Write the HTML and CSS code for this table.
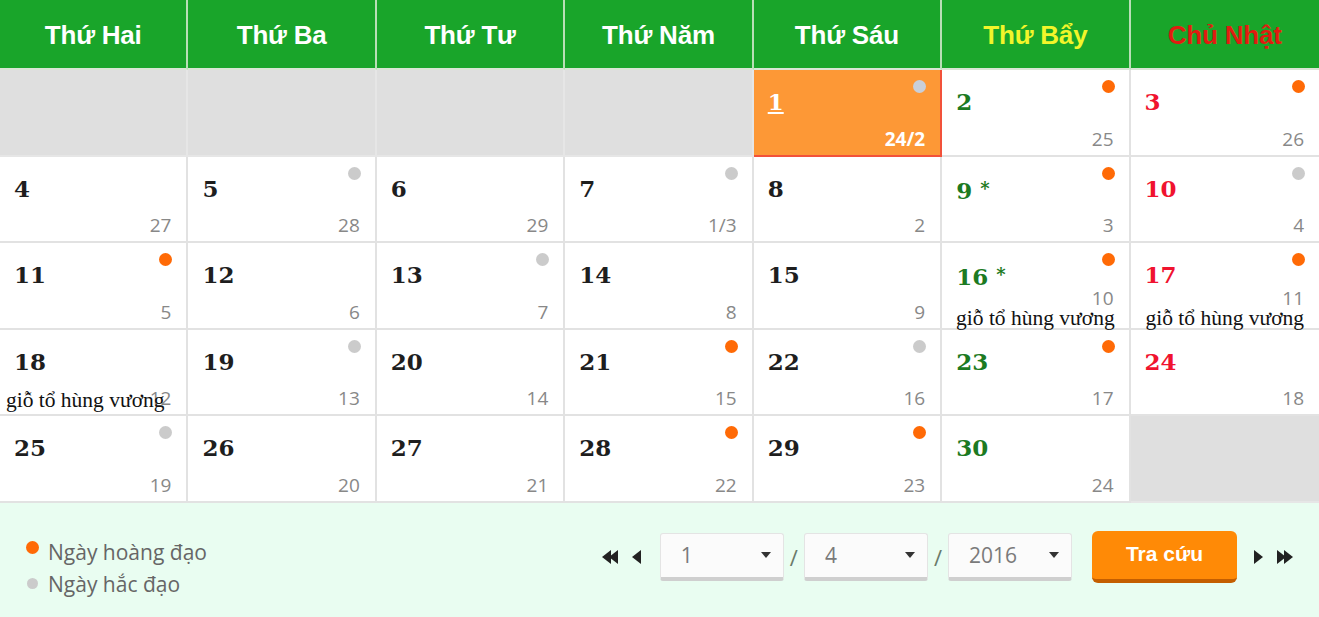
FILE: index.html
```html
<!DOCTYPE html>
<html lang="vi">
<head>
<meta charset="utf-8">
<title>Lịch tháng 4/2016</title>
<link rel="stylesheet" href="styles.css">
</head>
<body>
<div class="cal">
  <div class="hd">Thứ Hai</div>
  <div class="hd">Thứ Ba</div>
  <div class="hd">Thứ Tư</div>
  <div class="hd">Thứ Năm</div>
  <div class="hd">Thứ Sáu</div>
  <div class="hd hd-sat">Thứ Bẩy</div>
  <div class="hd hd-sun">Chủ Nhật</div>

  <div class="cell empty"></div>
  <div class="cell empty"></div>
  <div class="cell empty"></div>
  <div class="cell empty"></div>
  <div class="cell today"><span class="day">1</span><span class="dot dot-grey"></span><span class="lunar">24/2</span></div>
  <div class="cell sat"><span class="day">2</span><span class="dot dot-or"></span><span class="lunar">25</span></div>
  <div class="cell sun"><span class="day">3</span><span class="dot dot-or"></span><span class="lunar">26</span></div>

  <div class="cell"><span class="day">4</span><span class="lunar">27</span></div>
  <div class="cell"><span class="day">5</span><span class="dot dot-grey"></span><span class="lunar">28</span></div>
  <div class="cell"><span class="day">6</span><span class="lunar">29</span></div>
  <div class="cell"><span class="day">7</span><span class="dot dot-grey"></span><span class="lunar">1/3</span></div>
  <div class="cell"><span class="day">8</span><span class="lunar">2</span></div>
  <div class="cell sat"><span class="day">9 <span class="star">*</span></span><span class="dot dot-or"></span><span class="lunar">3</span></div>
  <div class="cell sun"><span class="day">10</span><span class="dot dot-grey"></span><span class="lunar">4</span></div>

  <div class="cell"><span class="day">11</span><span class="dot dot-or"></span><span class="lunar">5</span></div>
  <div class="cell"><span class="day">12</span><span class="lunar">6</span></div>
  <div class="cell"><span class="day">13</span><span class="dot dot-grey"></span><span class="lunar">7</span></div>
  <div class="cell"><span class="day">14</span><span class="lunar">8</span></div>
  <div class="cell"><span class="day">15</span><span class="lunar">9</span></div>
  <div class="cell sat fest-a"><span class="day">16 <span class="star">*</span></span><span class="dot dot-or"></span><span class="lunar">10</span><span class="fest">giỗ tổ hùng vương</span></div>
  <div class="cell sun fest-a"><span class="day">17</span><span class="dot dot-or"></span><span class="lunar">11</span><span class="fest">giỗ tổ hùng vương</span></div>

  <div class="cell fest-b"><span class="day">18</span><span class="lunar">12</span><span class="fest">giỗ tổ hùng vương</span></div>
  <div class="cell"><span class="day">19</span><span class="dot dot-grey"></span><span class="lunar">13</span></div>
  <div class="cell"><span class="day">20</span><span class="lunar">14</span></div>
  <div class="cell"><span class="day">21</span><span class="dot dot-or"></span><span class="lunar">15</span></div>
  <div class="cell"><span class="day">22</span><span class="dot dot-grey"></span><span class="lunar">16</span></div>
  <div class="cell sat"><span class="day">23</span><span class="dot dot-or"></span><span class="lunar">17</span></div>
  <div class="cell sun"><span class="day">24</span><span class="lunar">18</span></div>

  <div class="cell"><span class="day">25</span><span class="dot dot-grey"></span><span class="lunar">19</span></div>
  <div class="cell"><span class="day">26</span><span class="lunar">20</span></div>
  <div class="cell"><span class="day">27</span><span class="lunar">21</span></div>
  <div class="cell"><span class="day">28</span><span class="dot dot-or"></span><span class="lunar">22</span></div>
  <div class="cell"><span class="day">29</span><span class="dot dot-or"></span><span class="lunar">23</span></div>
  <div class="cell sat"><span class="day">30</span><span class="lunar">24</span></div>
  <div class="cell empty"></div>
</div>

<div class="foot">
  <div class="legend">
    <div class="lg-item"><span class="lg-dot dot-or"></span>Ngày hoàng đạo</div>
    <div class="lg-item"><span class="lg-dot dot-grey"></span>Ngày hắc đạo</div>
  </div>
  <div class="controls">
    <span class="nav nav-prev">
      <svg width="22" height="16" viewBox="0 0 22 16"><polygon points="0,8 9,1 9,15" fill="#222"/><polygon points="7,8 16,1 16,15" fill="#222"/></svg>
      <svg width="10" height="16" viewBox="0 0 10 16"><polygon points="0,8 9,1 9,15" fill="#222"/></svg>
    </span>
    <div class="sel"><span>1</span><span class="caret"></span></div>
    <span class="slash">/</span>
    <div class="sel"><span>4</span><span class="caret"></span></div>
    <span class="slash">/</span>
    <div class="sel"><span>2016</span><span class="caret"></span></div>
    <button class="btn">Tra cứu</button>
    <span class="nav nav-next">
      <svg width="10" height="16" viewBox="0 0 10 16"><polygon points="10,8 1,1 1,15" fill="#222"/></svg>
      <svg width="22" height="16" viewBox="0 0 22 16"><polygon points="15,8 6,1 6,15" fill="#222"/><polygon points="22,8 13,1 13,15" fill="#222"/></svg>
    </span>
  </div>
</div>
</body>
</html>
```

FILE: styles.css
```css
html, body {
  margin: 0;
  padding: 0;
  background: #fff;
}
body {
  width: 1319px;
  height: 617px;
  overflow: hidden;
  font-family: "Liberation Sans", Arial, sans-serif;
}
.cal {
  display: grid;
  grid-template-columns: repeat(7, 1fr);
  grid-template-rows: 70px repeat(5, 86.6px);
}
.hd {
  background: #19a52a;
  color: #fff;
  font-weight: bold;
  font-size: 26px;
  display: flex;
  align-items: center;
  justify-content: center;
  padding-top: 3px;
  border-right: 2px solid #b9dfb6;
  border-bottom: 2px solid #d9e6d6;
  box-sizing: border-box;
  letter-spacing: -0.2px;
}
.hd-sat { color: #f2f52a; }
.hd-sun { color: #e01c10; border-right: none; }

.cell {
  position: relative;
  box-sizing: border-box;
  border-right: 2px solid #e2e2e2;
  border-bottom: 2px solid #e2e2e2;
  background: #fff;
  color: #1e1e1e;
}
.cell:nth-child(7n) { border-right: none; }
.cell.empty { background: #dfdfdf; border-color: #e6e6e6; }

.day {
  position: absolute;
  left: 14px;
  top: 19px;
  font-family: "DejaVu Serif", Georgia, serif;
  font-weight: bold;
  font-size: 23px;
  line-height: 26px;
}
.star {
  font-size: 18px;
  vertical-align: 4px;
}
.lunar {
  position: absolute;
  right: 15px;
  bottom: 4px;
  font-family: "Open Sans", "Liberation Sans", sans-serif;
  font-size: 19px;
  line-height: 24px;
  color: #888;
}
.dot {
  position: absolute;
  top: 10px;
  right: 14px;
  width: 13px;
  height: 13px;
  border-radius: 50%;
}
.dot-or { background: #ff6a06; }
.dot-grey { background: #cbcbcb; }

.sat .day { color: #1c7a22; }
.sun .day { color: #f0132f; }

.today {
  background: #fd9836;
  border-right: 2px solid #f2513a;
  border-bottom: 2px solid #f2513a;
}
.today .day { color: #fff; text-decoration: underline; text-underline-offset: 2px; }
.today .lunar { color: #fff; font-weight: bold; }
.today .dot { background: #c9cfd9; }

.fest {
  position: absolute;
  left: 0;
  right: 0;
  text-align: center;
  font-family: "Liberation Serif", "Times New Roman", serif;
  font-size: 21.5px;
  line-height: 20px;
  color: #111;
  white-space: nowrap;
}
.fest-a .lunar { bottom: 18px; }
.fest-a .fest { bottom: 0; }
.fest-b .fest { bottom: 4px; left: -16px; }

.foot {
  height: 114px;
  background: #e9fdf1;
  display: flex;
  align-items: center;
  justify-content: space-between;
  padding: 0 26px 0 26px;
  box-sizing: border-box;
}
.legend {
  display: flex;
  flex-direction: column;
  gap: 6px;
  margin-top: 16px;
  color: #666;
  font-family: "Open Sans", "Liberation Sans", sans-serif;
  font-size: 21px;
}
.lg-item {
  display: flex;
  align-items: center;
  gap: 9px;
  line-height: 26px;
}
.lg-dot {
  width: 13px;
  height: 13px;
  border-radius: 50%;
  margin-top: -8px;
}
.lg-item .dot-grey { width: 11px; height: 11px; margin-left: 1px; margin-right: 1px; margin-top: 0; }

.controls {
  display: flex;
  align-items: center;
  margin-top: -6px;
}
.nav {
  display: flex;
  align-items: center;
  gap: 8px;
}
.nav-prev { margin-right: 18px; }
.nav-next { margin-left: 16px; }
.sel {
  width: 124px;
  height: 48px;
  box-sizing: border-box;
  background: #fbfbfb;
  border: 1px solid #e4e4e4;
  border-bottom: 4px solid #cfcfcf;
  border-radius: 3px;
  display: flex;
  align-items: center;
  justify-content: space-between;
  padding: 0 12px 0 20px;
  font-family: "Open Sans", "Liberation Sans", sans-serif;
  font-size: 21px;
  color: #7a7a7a;
}
.caret {
  width: 0;
  height: 0;
  border-left: 5px solid transparent;
  border-right: 5px solid transparent;
  border-top: 6px solid #333;
}
.slash {
  color: #6a7a6a;
  font-size: 22px;
  margin: 0 6px;
  font-family: "Open Sans", "Liberation Sans", sans-serif;
}
.btn {
  margin-left: 20px;
  width: 145px;
  height: 52px;
  background: #ff8a06;
  border: none;
  border-bottom: 4px solid #c45e00;
  border-radius: 6px;
  color: #fff;
  font-family: "Liberation Sans", Arial, sans-serif;
  font-weight: bold;
  font-size: 21px;
  padding: 0 0 2px 0;
}
```
